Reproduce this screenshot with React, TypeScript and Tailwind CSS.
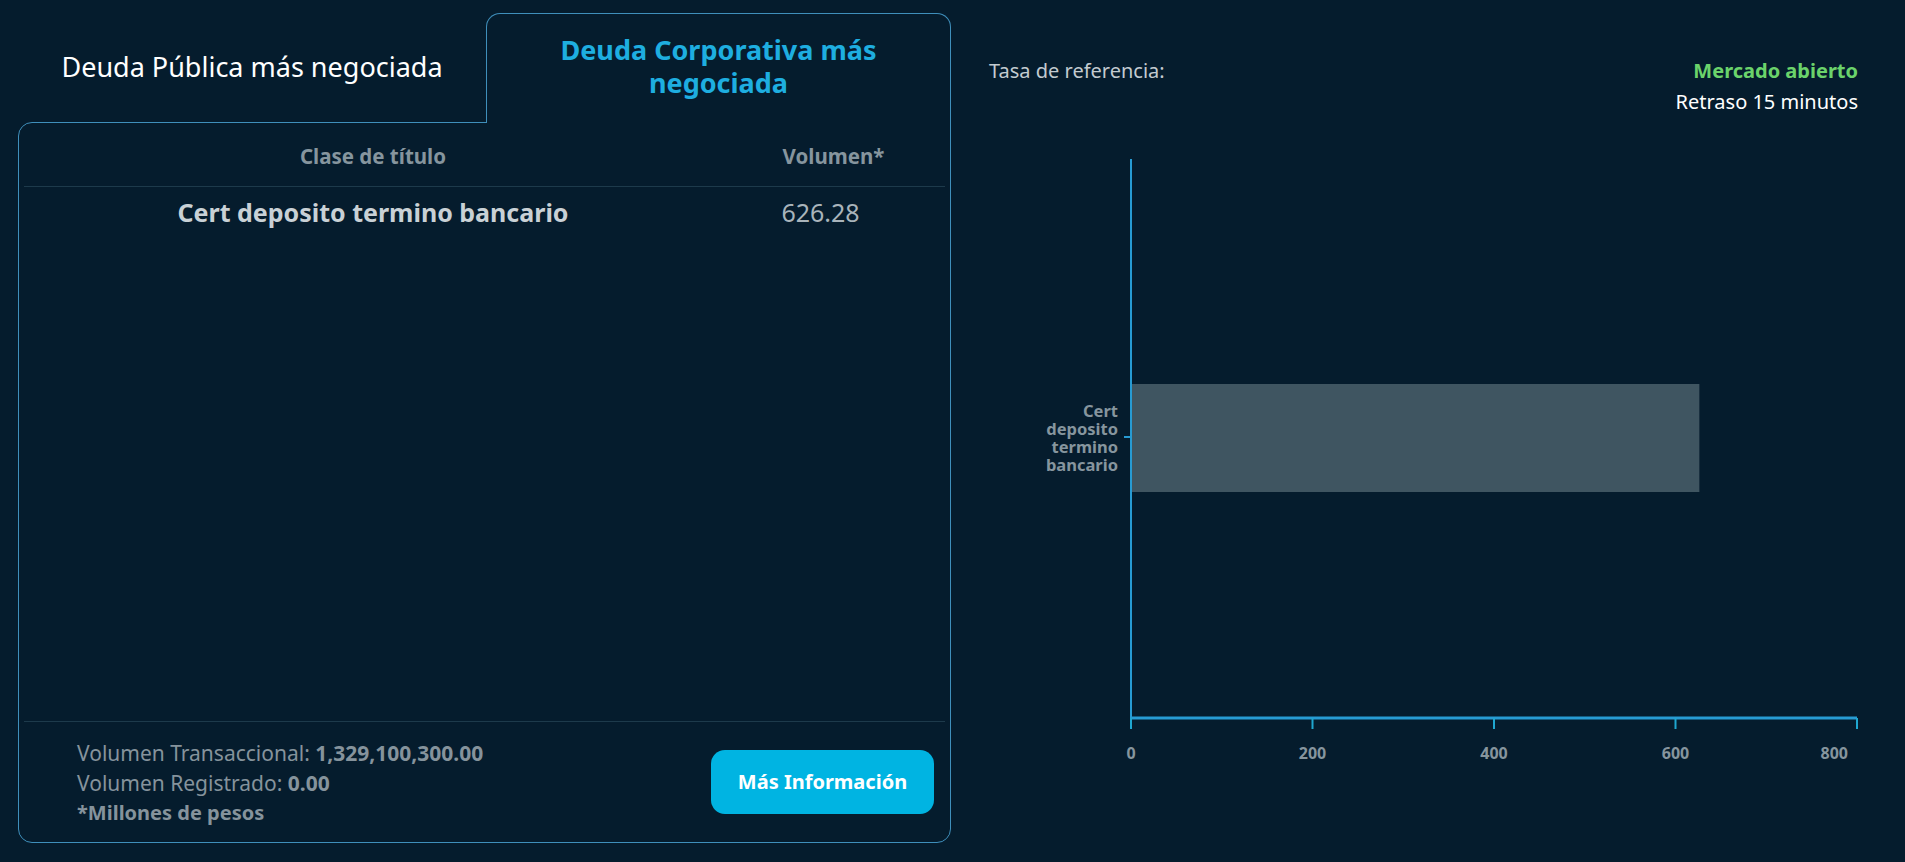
const FONT = "font-['Noto_Sans','Lato',sans-serif]";
const SVG_FONT = "'Noto Sans', Lato, sans-serif";

const TICKS = [0, 200, 400, 600, 800];

function BarChart() {
  // x scale: 0..800 over 142..868
  const x0 = 142;
  const x1 = 868;
  const sx = (v: number) => x0 + ((x1 - x0) * v) / 800;
  const value = 626.28;

  return (
    <svg width={869} height={640} className="block overflow-visible">
      <rect x={x0} y={244} width={sx(value) - x0} height={108} fill="#3f5561" />
      <line x1={x0} y1={19} x2={x0} y2={578} stroke="#279bd3" strokeWidth={2} />
      <line x1={135} y1={297} x2={x0} y2={297} stroke="#279bd3" strokeWidth={2} />
      <line x1={x0} y1={578} x2={x1} y2={578} stroke="#279bd3" strokeWidth={3} />
      {TICKS.map((t, i) => {
        const last = i === TICKS.length - 1;
        return (
          <g key={t}>
            <line x1={sx(t)} y1={578} x2={sx(t)} y2={589} stroke="#1fa6cf" strokeWidth={2} />
            <text
              x={last ? sx(t) - 9 : sx(t)}
              y={619}
              textAnchor={last ? "end" : "middle"}
              fill="#86959e"
              fontSize={16}
              fontWeight={700}
              fontFamily={SVG_FONT}
            >
              {t}
            </text>
          </g>
        );
      })}
      <text
        x={129}
        y={277}
        textAnchor="end"
        fill="#86959e"
        fontSize={16.5}
        fontWeight={700}
        fontFamily={SVG_FONT}
      >
        {["Cert", "deposito", "termino", "bancario"].map((w, i) => (
          <tspan key={w} x={129} dy={i === 0 ? 0 : 18}>
            {w}
          </tspan>
        ))}
      </text>
    </svg>
  );
}

export default function App() {
  return (
    <main className={`min-h-[862px] w-full bg-[#051c2d] ${FONT} flex pt-[13px] pl-[18px]`}>
      {/* left: tabs + table */}
      <section className="w-[933px] flex flex-col">
        <div className="flex h-[109px]">
          <button className="w-[468px] flex items-center justify-center text-[27px] text-white pb-[1px]">
            Deuda Pública más negociada
          </button>
          <button className="relative z-10 -mb-px w-[465px] rounded-t-[14px] border border-b-0 border-[#3f8fbb] bg-[#051c2d] pb-[6px] text-[27px] font-bold leading-[33px] text-[#1eaee0]">
            Deuda Corporativa más
            <br />
            negociada
          </button>
        </div>

        <div className="h-[721px] rounded-[14px] rounded-tr-none border border-[#3f8fbb] px-[5px] flex flex-col">
          <div className="grid grid-cols-[698px_1fr] h-[64px] items-center border-b border-[#1d3a4b] text-[20.5px] font-bold text-[#86959e] pt-[3px]">
            <span className="text-center">Clase de título</span>
            <span className="text-center">Volumen*</span>
          </div>
          <div className="grid grid-cols-[698px_1fr] h-[52px] items-center text-[25px]">
            <span className="text-center font-bold text-[#c9d1d6]">Cert deposito termino bancario</span>
            <span className="text-center text-[#a9b4bb] pr-[26px]">626.28</span>
          </div>

          <div className="flex-1" />

          <div className="h-[121px] border-t border-[#1d3a4b] flex items-start justify-between pl-[53px] pr-[11px] pt-[16px]">
            <div className="text-[21px] leading-[30px] text-[#85939c]">
              <p>
                Volumen Transaccional: <b className="font-bold">1,329,100,300.00</b>
              </p>
              <p>
                Volumen Registrado: <b className="font-bold">0.00</b>
              </p>
              <p className="font-bold text-[20px]">*Millones de pesos</p>
            </div>
            <button className="mt-[12px] w-[223px] h-[64px] rounded-[14px] bg-[#00b4e2] text-white text-[20px] font-bold">
              Más Información
            </button>
          </div>
        </div>
      </section>

      {/* right: chart */}
      <section className="ml-[38px] w-[869px] flex flex-col">
        <div className="flex justify-between pt-[42px] text-[20px] leading-[31px]">
          <span className="text-[#c3cbd0]">Tasa de referencia:</span>
          <div className="text-right">
            <p className="font-bold text-[#6bd36b]">Mercado abierto</p>
            <p className="text-white">Retraso 15 minutos</p>
          </div>
        </div>
        <div className="mt-[23px]">
          <BarChart />
        </div>
      </section>
    </main>
  );
}
